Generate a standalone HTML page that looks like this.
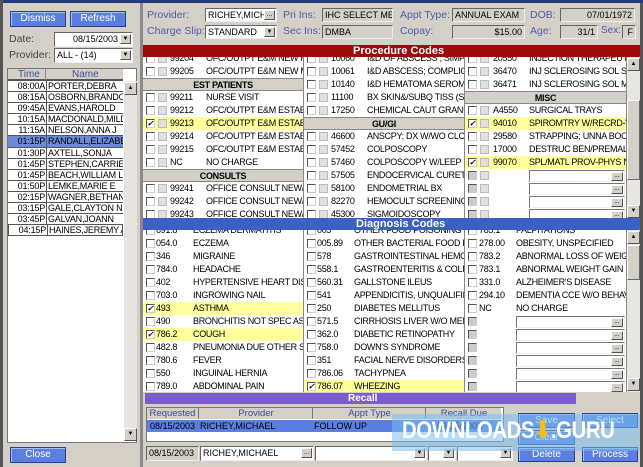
<!DOCTYPE html>
<html><head><meta charset="utf-8"><style>
*{margin:0;padding:0;box-sizing:border-box}
body{width:643px;height:467px;overflow:hidden;background:#d4d0c8;font-family:"Liberation Sans",sans-serif;font-size:10px;color:#000;position:relative}
.a{position:absolute}
.btn{position:absolute;background:#5b7fe0;color:#fff;text-align:center;font-size:10px;line-height:14px;border:1px solid #2a3f90;box-shadow:inset 1px 1px #a8bcf4}
.lbl{position:absolute;color:#4b5da8;font-size:10.5px;white-space:nowrap}
.inp{position:absolute;background:#fff;border:1px solid #666;border-right-color:#eee;border-bottom-color:#eee;font-size:9px;line-height:12px;padding-left:2px;white-space:nowrap;overflow:hidden}
.ro{background:#d4d0c8}
.dd{position:absolute;right:1px;top:1px;width:11px;height:10px;background:#d4d0c8;border:1px solid #fff;border-right-color:#555;border-bottom-color:#555;font-size:6px;line-height:8px;text-align:center}
.bar{position:absolute;color:#fff;font-weight:bold;font-size:11px;line-height:12px}
.col{position:absolute;width:161px;background:#fff;overflow:hidden;border-right:1px solid #888}
.r{position:relative;height:13px;white-space:nowrap;font-size:9px;letter-spacing:-0.3px;line-height:13px;overflow:hidden}
.y{background:#ffff9c}
.h{background:#d4d0c8;text-align:center;font-weight:bold;border-top:1px solid #888;border-bottom:1px solid #888}
.cb{position:absolute;top:2px;width:9px;height:9px;border:1px solid #555;border-right-color:#ccc;border-bottom-color:#ccc;background:#fff;font-size:8px;line-height:7px;font-weight:bold}
.gb{position:absolute;top:2px;width:9px;height:9px;background:#e2e0dc;border:1px solid #bbb}
.dis{background:#ccc}
.s{position:absolute}
.sb{position:absolute;background:#e8e6e2;width:13px}
.arr{position:absolute;width:13px;height:13px;background:#d4d0c8;border:1px solid #fff;border-right-color:#555;border-bottom-color:#555;font-size:6px;line-height:11px;text-align:center}
.lr{height:11.1px;line-height:11px;font-size:9px;letter-spacing:-0.2px;white-space:nowrap;overflow:hidden;border-bottom:1px solid #555;position:relative}
.lr span{position:absolute}
.t{left:2px;width:35px;text-align:right}
.n{left:38px;border-left:1px solid #555;padding-left:1px;height:11px}
.ei{position:absolute;top:1px;height:12px;background:#fff;border:1px solid #777;border-right-color:#eee;border-bottom-color:#eee}
.eb{position:absolute;right:1px;top:1px;width:12px;height:9px;background:#d4d0c8;font-size:7px;line-height:6px;text-align:center;border:1px solid #fff;border-right-color:#555;border-bottom-color:#555}
</style></head><body>
<div class="a" style="left:0;top:0;width:643px;height:3px;background:#243a7a"></div>
<div class="a" style="left:0;top:0;width:3px;height:467px;background:#555"></div>
<div class="a" style="left:140px;top:3px;width:3px;height:464px;background:#8a8a8a"></div>
<div class="a" style="left:640px;top:3px;width:3px;height:464px;background:#555"></div>

<div class="btn" style="left:10px;top:11px;width:56px;height:16px">Dismiss</div>
<div class="btn" style="left:70px;top:11px;width:56px;height:16px">Refresh</div>
<div class="lbl" style="left:9px;top:33px;color:#444">Date:</div>
<div class="inp" style="left:54px;top:32px;width:79px;height:15px;text-align:right;padding-right:14px;line-height:13px">08/15/2003<div class="dd">▼</div></div>
<div class="lbl" style="left:9px;top:49px;color:#444">Provider:</div>
<div class="inp" style="left:54px;top:48px;width:79px;height:15px;line-height:13px">ALL - (14)<div class="dd">▼</div></div>
<div class="a" style="left:7px;top:68px;width:130px;height:375px;background:#fff;border:1px solid #777"></div>
<div class="a" style="left:8px;top:69px;width:115px;height:11px;background:#d4d0c8;font-size:10px;color:#3d4d99;line-height:11px;border-bottom:1px solid #555"><span class="s" style="left:10px">Time</span><span class="s" style="left:37px;top:0;height:11px;border-left:1px solid #888"></span><span class="s" style="left:64px">Name</span></div>
<div class="a" style="left:8px;top:80px;width:115px;border-top:1px solid #555">
<div class="lr"><span class="t">08:00A</span><span class="n">PORTER,DEBRA</span></div>
<div class="lr"><span class="t">08:15A</span><span class="n">OSBORN,BRANDON</span></div>
<div class="lr"><span class="t">09:45A</span><span class="n">EVANS,HAROLD</span></div>
<div class="lr"><span class="t">10:15A</span><span class="n">MACDONALD,MILDR</span></div>
<div class="lr"><span class="t">11:15A</span><span class="n">NELSON,ANNA J</span></div>
<div class="lr" style="background:#6a8ad8"><span class="t">01:15P</span><span class="n">RANDALL,ELIZABET</span></div>
<div class="lr"><span class="t">01:30P</span><span class="n">AXTELL,SONJA</span></div>
<div class="lr"><span class="t">01:45P</span><span class="n">STEPHEN,CARRIE I</span></div>
<div class="lr"><span class="t">01:45P</span><span class="n">BEACH,WILLIAM L</span></div>
<div class="lr"><span class="t">01:50P</span><span class="n">LEMKE,MARIE E</span></div>
<div class="lr"><span class="t">02:15P</span><span class="n">WAGNER,BETHANY</span></div>
<div class="lr"><span class="t">03:15P</span><span class="n">GALE,CLAYTON N</span></div>
<div class="lr"><span class="t">03:45P</span><span class="n">GALVAN,JOANN</span></div>
<div class="lr" style="border:1px solid #555;border-top:0"><span class="t">04:15P</span><span class="n">HAINES,JEREMY A</span></div>
</div>
<div class="sb" style="left:124px;top:81px;height:360px;background:#e6e4e0"></div>
<div class="arr" style="left:124px;top:82px">▲</div>
<div class="arr" style="left:124px;top:428px">▼</div>
<div class="btn" style="left:10px;top:447px;width:56px;height:16px">Close</div>

<div class="lbl" style="left:147px;top:9px">Provider:</div>
<div class="inp" style="left:205px;top:8px;width:72px;height:14px">RICHEY,MICHA<div class="dd" style="font-size:7px">...</div></div>
<div class="lbl" style="left:283px;top:9px">Pri Ins:</div>
<div class="inp ro" style="left:322px;top:8px;width:71px;height:14px">IHC SELECT MED</div>
<div class="lbl" style="left:400px;top:9px">Appt Type:</div>
<div class="inp ro" style="left:452px;top:8px;width:73px;height:14px">ANNUAL EXAM</div>
<div class="lbl" style="left:530px;top:9px">DOB:</div>
<div class="inp ro" style="left:560px;top:8px;width:75px;height:14px;text-align:right;padding-right:2px">07/01/1972</div>
<div class="lbl" style="left:147px;top:25px">Charge Slip:</div>
<div class="inp" style="left:205px;top:25px;width:72px;height:14px">STANDARD<div class="dd">▼</div></div>
<div class="lbl" style="left:283px;top:25px">Sec Ins:</div>
<div class="inp ro" style="left:322px;top:25px;width:71px;height:14px">DMBA</div>
<div class="lbl" style="left:400px;top:25px">Copay:</div>
<div class="inp ro" style="left:452px;top:25px;width:73px;height:14px;text-align:right;padding-right:2px">$15.00</div>
<div class="lbl" style="left:530px;top:25px">Age:</div>
<div class="inp ro" style="left:560px;top:25px;width:38px;height:14px;text-align:right;padding-right:2px">31/1</div>
<div class="lbl" style="left:601px;top:25px;font-size:10px">Sex:</div>
<div class="inp ro" style="left:622px;top:25px;width:14px;height:14px;text-align:right;padding-right:2px">F</div>

<div class="bar" style="left:143px;top:45px;width:497px;height:12px;background:#9c0a0a"><span class="s" style="left:210px">Procedure Codes</span></div>
<div class="col" style="left:143px;top:57px;height:161px"><div style="margin-top:-5px">
<div class="r"><i class="cb" style="left:3px"></i><i class="gb" style="left:15px"></i><span class="s" style="left:27px">99204</span><span class="s" style="left:63px">OFC/OUTPT E&amp;M NEW M</span></div>
<div class="r"><i class="cb" style="left:3px"></i><i class="gb" style="left:15px"></i><span class="s" style="left:27px">99205</span><span class="s" style="left:63px">OFC/OUTPT E&amp;M NEW M</span></div>
<div class="r h">EST PATIENTS</div>
<div class="r"><i class="cb" style="left:3px"></i><i class="gb" style="left:15px"></i><span class="s" style="left:27px">99211</span><span class="s" style="left:63px">NURSE VISIT</span></div>
<div class="r"><i class="cb" style="left:3px"></i><i class="gb" style="left:15px"></i><span class="s" style="left:27px">99212</span><span class="s" style="left:63px">OFC/OUTPT E&amp;M ESTAB</span></div>
<div class="r y"><i class="cb" style="left:3px">✓</i><i class="gb" style="left:15px"></i><span class="s" style="left:27px">99213</span><span class="s" style="left:63px">OFC/OUTPT E&amp;M ESTAB</span></div>
<div class="r"><i class="cb" style="left:3px"></i><i class="gb" style="left:15px"></i><span class="s" style="left:27px">99214</span><span class="s" style="left:63px">OFC/OUTPT E&amp;M ESTAB</span></div>
<div class="r"><i class="cb" style="left:3px"></i><i class="gb" style="left:15px"></i><span class="s" style="left:27px">99215</span><span class="s" style="left:63px">OFC/OUTPT E&amp;M ESTAB</span></div>
<div class="r"><i class="cb" style="left:3px"></i><i class="gb" style="left:15px"></i><span class="s" style="left:27px">NC</span><span class="s" style="left:63px">NO CHARGE</span></div>
<div class="r h">CONSULTS</div>
<div class="r"><i class="cb" style="left:3px"></i><i class="gb" style="left:15px"></i><span class="s" style="left:27px">99241</span><span class="s" style="left:63px">OFFICE CONSULT NEW/E</span></div>
<div class="r"><i class="cb" style="left:3px"></i><i class="gb" style="left:15px"></i><span class="s" style="left:27px">99242</span><span class="s" style="left:63px">OFFICE CONSULT NEW/E</span></div>
<div class="r"><i class="cb" style="left:3px"></i><i class="gb" style="left:15px"></i><span class="s" style="left:27px">99243</span><span class="s" style="left:63px">OFFICE CONSULT NEW/E</span></div>
</div></div>
<div class="col" style="left:304px;top:57px;height:161px"><div style="margin-top:-5px">
<div class="r"><i class="cb" style="left:3px"></i><i class="gb" style="left:15px"></i><span class="s" style="left:27px">10060</span><span class="s" style="left:63px">I&amp;D OF ABSCESS ; SIMPL</span></div>
<div class="r"><i class="cb" style="left:3px"></i><i class="gb" style="left:15px"></i><span class="s" style="left:27px">10061</span><span class="s" style="left:63px">I&amp;D ABSCESS; COMPLICA</span></div>
<div class="r"><i class="cb" style="left:3px"></i><i class="gb" style="left:15px"></i><span class="s" style="left:27px">10140</span><span class="s" style="left:63px">I&amp;D HEMATOMA SEROMA</span></div>
<div class="r"><i class="cb" style="left:3px"></i><i class="gb" style="left:15px"></i><span class="s" style="left:27px">11100</span><span class="s" style="left:63px">BX SKIN&amp;/SUBQ TISS (SE</span></div>
<div class="r"><i class="cb" style="left:3px"></i><i class="gb" style="left:15px"></i><span class="s" style="left:27px">17250</span><span class="s" style="left:63px">CHEMICAL CAUT GRANU</span></div>
<div class="r h">GU/GI</div>
<div class="r"><i class="cb" style="left:3px"></i><i class="gb" style="left:15px"></i><span class="s" style="left:27px">46600</span><span class="s" style="left:63px">ANSCPY; DX W/WO CLCT</span></div>
<div class="r"><i class="cb" style="left:3px"></i><i class="gb" style="left:15px"></i><span class="s" style="left:27px">57452</span><span class="s" style="left:63px">COLPOSCOPY</span></div>
<div class="r"><i class="cb" style="left:3px"></i><i class="gb" style="left:15px"></i><span class="s" style="left:27px">57460</span><span class="s" style="left:63px">COLPOSCOPY W/LEEP</span></div>
<div class="r"><i class="cb" style="left:3px"></i><i class="gb" style="left:15px"></i><span class="s" style="left:27px">57505</span><span class="s" style="left:63px">ENDOCERVICAL CURETT</span></div>
<div class="r"><i class="cb" style="left:3px"></i><i class="gb" style="left:15px"></i><span class="s" style="left:27px">58100</span><span class="s" style="left:63px">ENDOMETRIAL BX</span></div>
<div class="r"><i class="cb" style="left:3px"></i><i class="gb" style="left:15px"></i><span class="s" style="left:27px">82270</span><span class="s" style="left:63px">HEMOCULT SCREENING</span></div>
<div class="r"><i class="cb" style="left:3px"></i><i class="gb" style="left:15px"></i><span class="s" style="left:27px">45300</span><span class="s" style="left:63px">SIGMOIDOSCOPY</span></div>
</div></div>
<div class="col" style="left:465px;top:57px;height:161px;width:162px"><div style="margin-top:-5px">
<div class="r"><i class="cb" style="left:3px"></i><i class="gb" style="left:15px"></i><span class="s" style="left:28px">20550</span><span class="s" style="left:64px">INJECTION THERAPEUTI</span></div>
<div class="r"><i class="cb" style="left:3px"></i><i class="gb" style="left:15px"></i><span class="s" style="left:28px">36470</span><span class="s" style="left:64px">INJ SCLEROSING SOL SI</span></div>
<div class="r"><i class="cb" style="left:3px"></i><i class="gb" style="left:15px"></i><span class="s" style="left:28px">36471</span><span class="s" style="left:64px">INJ SCLEROSING SOL MX</span></div>
<div class="r h">MISC</div>
<div class="r"><i class="cb" style="left:3px"></i><i class="gb" style="left:15px"></i><span class="s" style="left:28px">A4550</span><span class="s" style="left:64px">SURGICAL TRAYS</span></div>
<div class="r y"><i class="cb" style="left:3px">✓</i><i class="gb" style="left:15px"></i><span class="s" style="left:28px">94010</span><span class="s" style="left:64px">SPIROMTRY W/RECRD-W</span></div>
<div class="r"><i class="cb" style="left:3px"></i><i class="gb" style="left:15px"></i><span class="s" style="left:28px">29580</span><span class="s" style="left:64px">STRAPPING; UNNA BOOT</span></div>
<div class="r"><i class="cb" style="left:3px"></i><i class="gb" style="left:15px"></i><span class="s" style="left:28px">17000</span><span class="s" style="left:64px">DESTRUC BEN/PREMALIG</span></div>
<div class="r y"><i class="cb" style="left:3px">✓</i><i class="gb" style="left:15px"></i><span class="s" style="left:28px">99070</span><span class="s" style="left:64px">SPL/MATL PROV-PHYS NC</span></div>
<div class="r"><i class="cb dis" style="left:3px"></i><i class="gb" style="left:15px"></i><i class="ei" style="left:64px;width:96px"><i class="eb">...</i></i></div>
<div class="r"><i class="cb dis" style="left:3px"></i><i class="gb" style="left:15px"></i><i class="ei" style="left:64px;width:96px"><i class="eb">...</i></i></div>
<div class="r"><i class="cb dis" style="left:3px"></i><i class="gb" style="left:15px"></i><i class="ei" style="left:64px;width:96px"><i class="eb">...</i></i></div>
<div class="r"><i class="cb dis" style="left:3px"></i><i class="gb" style="left:15px"></i><i class="ei" style="left:64px;width:96px"><i class="eb">...</i></i></div>
</div></div>
<div class="sb" style="left:627px;top:57px;height:161px"></div>
<div class="a" style="left:627px;top:100px;width:13px;height:80px;background:#d4d0c8;border:1px solid #fff;border-right-color:#666;border-bottom-color:#666"></div>
<div class="arr" style="left:627px;top:58px">▲</div>
<div class="arr" style="left:627px;top:205px">▼</div>

<div class="bar" style="left:143px;top:218px;width:497px;height:12px;background:#3c5fc4"><span class="s" style="left:213px">Diagnosis Codes</span></div>
<div class="col" style="left:143px;top:230px;height:162px"><div style="margin-top:-6px">
<div class="r"><i class="cb" style="left:3px"></i><span class="s" style="left:13px">691.8</span><span class="s" style="left:50px">ECZEMA DERMATITIS</span></div>
<div class="r"><i class="cb" style="left:3px"></i><span class="s" style="left:13px">054.0</span><span class="s" style="left:50px">ECZEMA</span></div>
<div class="r"><i class="cb" style="left:3px"></i><span class="s" style="left:13px">346</span><span class="s" style="left:50px">MIGRAINE</span></div>
<div class="r"><i class="cb" style="left:3px"></i><span class="s" style="left:13px">784.0</span><span class="s" style="left:50px">HEADACHE</span></div>
<div class="r"><i class="cb" style="left:3px"></i><span class="s" style="left:13px">402</span><span class="s" style="left:50px">HYPERTENSIVE HEART DISEA</span></div>
<div class="r"><i class="cb" style="left:3px"></i><span class="s" style="left:13px">703.0</span><span class="s" style="left:50px">INGROWING NAIL</span></div>
<div class="r y"><i class="cb" style="left:3px">✓</i><span class="s" style="left:13px">493</span><span class="s" style="left:50px">ASTHMA</span></div>
<div class="r"><i class="cb" style="left:3px"></i><span class="s" style="left:13px">490</span><span class="s" style="left:50px">BRONCHITIS NOT SPEC AS A</span></div>
<div class="r y"><i class="cb" style="left:3px">✓</i><span class="s" style="left:13px">786.2</span><span class="s" style="left:50px">COUGH</span></div>
<div class="r"><i class="cb" style="left:3px"></i><span class="s" style="left:13px">482.8</span><span class="s" style="left:50px">PNEUMONIA DUE OTHER SPE</span></div>
<div class="r"><i class="cb" style="left:3px"></i><span class="s" style="left:13px">780.6</span><span class="s" style="left:50px">FEVER</span></div>
<div class="r"><i class="cb" style="left:3px"></i><span class="s" style="left:13px">550</span><span class="s" style="left:50px">INGUINAL HERNIA</span></div>
<div class="r"><i class="cb" style="left:3px"></i><span class="s" style="left:13px">789.0</span><span class="s" style="left:50px">ABDOMINAL PAIN</span></div>
</div></div>
<div class="col" style="left:304px;top:230px;height:162px"><div style="margin-top:-6px">
<div class="r"><i class="cb" style="left:3px"></i><span class="s" style="left:13px">005</span><span class="s" style="left:50px">OTHER FOOD POISONING</span></div>
<div class="r"><i class="cb" style="left:3px"></i><span class="s" style="left:13px">005.89</span><span class="s" style="left:50px">OTHER BACTERIAL FOOD PO</span></div>
<div class="r"><i class="cb" style="left:3px"></i><span class="s" style="left:13px">578</span><span class="s" style="left:50px">GASTROINTESTINAL HEMOR</span></div>
<div class="r"><i class="cb" style="left:3px"></i><span class="s" style="left:13px">558.1</span><span class="s" style="left:50px">GASTROENTERITIS &amp; COLIT</span></div>
<div class="r"><i class="cb" style="left:3px"></i><span class="s" style="left:13px">560.31</span><span class="s" style="left:50px">GALLSTONE ILEUS</span></div>
<div class="r"><i class="cb" style="left:3px"></i><span class="s" style="left:13px">541</span><span class="s" style="left:50px">APPENDICITIS, UNQUALIFIE</span></div>
<div class="r"><i class="cb" style="left:3px"></i><span class="s" style="left:13px">250</span><span class="s" style="left:50px">DIABETES MELLITUS</span></div>
<div class="r"><i class="cb" style="left:3px"></i><span class="s" style="left:13px">571.5</span><span class="s" style="left:50px">CIRRHOSIS LIVER W/O MEN</span></div>
<div class="r"><i class="cb" style="left:3px"></i><span class="s" style="left:13px">362.0</span><span class="s" style="left:50px">DIABETIC RETINOPATHY</span></div>
<div class="r"><i class="cb" style="left:3px"></i><span class="s" style="left:13px">758.0</span><span class="s" style="left:50px">DOWN'S SYNDROME</span></div>
<div class="r"><i class="cb" style="left:3px"></i><span class="s" style="left:13px">351</span><span class="s" style="left:50px">FACIAL NERVE DISORDERS</span></div>
<div class="r"><i class="cb" style="left:3px"></i><span class="s" style="left:13px">786.06</span><span class="s" style="left:50px">TACHYPNEA</span></div>
<div class="r y"><i class="cb" style="left:3px">✓</i><span class="s" style="left:13px">786.07</span><span class="s" style="left:50px">WHEEZING</span></div>
</div></div>
<div class="col" style="left:465px;top:230px;height:162px;width:162px"><div style="margin-top:-6px">
<div class="r"><i class="cb" style="left:3px"></i><span class="s" style="left:14px">785.1</span><span class="s" style="left:51px">PALPITATIONS</span></div>
<div class="r"><i class="cb" style="left:3px"></i><span class="s" style="left:14px">278.00</span><span class="s" style="left:51px">OBESITY, UNSPECIFIED</span></div>
<div class="r"><i class="cb" style="left:3px"></i><span class="s" style="left:14px">783.2</span><span class="s" style="left:51px">ABNORMAL LOSS OF WEIGH</span></div>
<div class="r"><i class="cb" style="left:3px"></i><span class="s" style="left:14px">783.1</span><span class="s" style="left:51px">ABNORMAL WEIGHT GAIN</span></div>
<div class="r"><i class="cb" style="left:3px"></i><span class="s" style="left:14px">331.0</span><span class="s" style="left:51px">ALZHEIMER'S DISEASE</span></div>
<div class="r"><i class="cb" style="left:3px"></i><span class="s" style="left:14px">294.10</span><span class="s" style="left:51px">DEMENTIA CCE W/O BEHAV</span></div>
<div class="r"><i class="cb" style="left:3px"></i><span class="s" style="left:14px">NC</span><span class="s" style="left:51px">NO CHARGE</span></div>
<div class="r"><i class="cb dis" style="left:3px"></i><i class="ei" style="left:51px;width:109px"><i class="eb">...</i></i></div>
<div class="r"><i class="cb dis" style="left:3px"></i><i class="ei" style="left:51px;width:109px"><i class="eb">...</i></i></div>
<div class="r"><i class="cb dis" style="left:3px"></i><i class="ei" style="left:51px;width:109px"><i class="eb">...</i></i></div>
<div class="r"><i class="cb dis" style="left:3px"></i><i class="ei" style="left:51px;width:109px"><i class="eb">...</i></i></div>
<div class="r"><i class="cb dis" style="left:3px"></i><i class="ei" style="left:51px;width:109px"><i class="eb">...</i></i></div>
<div class="r"><i class="cb dis" style="left:3px"></i><i class="ei" style="left:51px;width:109px"><i class="eb">...</i></i></div>
</div></div>
<div class="sb" style="left:627px;top:230px;height:162px"></div>
<div class="a" style="left:627px;top:245px;width:13px;height:35px;background:#d4d0c8;border:1px solid #fff;border-right-color:#666;border-bottom-color:#666"></div>
<div class="arr" style="left:627px;top:231px">▲</div>
<div class="arr" style="left:627px;top:378px">▼</div>

<div class="a" style="left:143px;top:392px;width:497px;height:75px;background:#d4d0c8"></div>
<div class="bar" style="left:145px;top:393px;width:431px;height:11px;background:#7a5ccc;line-height:11px;font-size:10px"><span class="s" style="left:203px">Recall</span></div>
<div class="a" style="left:146px;top:407px;width:358px;height:35px;background:#fff;border:1px solid #777"></div>
<div class="a" style="left:147px;top:408px;width:354px;height:11px;background:#d4d0c8;color:#3d4d99;font-size:9.5px;line-height:11px">
<span class="s" style="left:0;width:52px;text-align:center;border-right:1px solid #777">Requested</span>
<span class="s" style="left:53px;width:113px;text-align:center;border-right:1px solid #777">Provider</span>
<span class="s" style="left:167px;width:112px;text-align:center;border-right:1px solid #777">Appt Type</span>
<span class="s" style="left:280px;width:74px;text-align:center">Recall Due</span></div>
<div class="a" style="left:147px;top:420px;width:354px;height:12px;background:#5b7ee0;font-size:9px;line-height:12px;white-space:nowrap">
<span class="s" style="left:3px">08/15/2003</span><span class="s" style="left:53px">RICHEY,MICHAEL</span><span class="s" style="left:167px">FOLLOW UP</span><span class="s" style="left:290px">09/15/2003</span></div>
<div class="inp ro" style="left:146px;top:446px;width:53px;height:15px">08/15/2003</div>
<div class="inp" style="left:200px;top:446px;width:114px;height:15px">RICHEY,MICHAEL<div class="dd">...</div></div>
<div class="inp" style="left:315px;top:446px;width:112px;height:15px"><div class="dd">▼</div></div>
<div class="inp" style="left:428px;top:446px;width:28px;height:15px"><div class="dd">▼</div></div>
<div class="inp" style="left:457px;top:446px;width:56px;height:15px"><div class="dd">▼</div></div>
<div class="btn" style="left:518px;top:413px;width:57px;height:15px">Save</div>
<div class="btn" style="left:582px;top:413px;width:56px;height:15px">Select</div>
<div class="btn" style="left:518px;top:430px;width:57px;height:15px">Clear</div>
<div class="btn" style="left:518px;top:447px;width:57px;height:15px">Delete</div>
<div class="btn" style="left:582px;top:447px;width:56px;height:15px">Process</div>

<div class="a" style="left:392px;top:414px;width:248px;height:37px;background:rgba(120,190,240,0.55)"></div>
<div class="a" style="left:402px;top:416px;font-size:24px;font-weight:bold;color:#fff;letter-spacing:-0.5px;line-height:30px;white-space:nowrap;transform:scaleX(0.85);transform-origin:left">DOWNLOADS<span style="color:#f0c020">⬇</span>.GURU</div>
</body></html>
